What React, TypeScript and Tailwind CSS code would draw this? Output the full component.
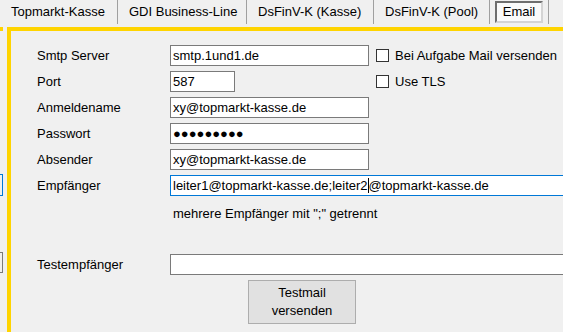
import React from "react";

const font = { fontFamily: '"Liberation Sans", Arial, sans-serif' };

function Tab({ label, w, active }: { label: string; w: string; active?: boolean }) {
  if (active) {
    return (
      <div className={`${w} h-[24px] border-r border-[#a0a0a0] flex items-center justify-center`}>
        <div className="h-[22px] w-[48px] border-2 border-t-[#6e6e6e] border-l-[#6e6e6e] border-b-[#d4d4d4] border-r-[#d4d4d4] bg-[#fafafa] flex items-center justify-center">
          Email
        </div>
      </div>
    );
  }
  return (
    <div className={`${w} h-[24px] border-r border-[#a0a0a0] flex items-center pl-[11px]`}>
      {label}
    </div>
  );
}

function Checkbox({ label }: { label: string }) {
  return (
    <div className="flex items-center gap-[6px] ml-[7px] whitespace-nowrap">
      <div className="w-[13px] h-[13px] border border-[#333333] bg-white" />
      <span>{label}</span>
    </div>
  );
}

function Row({
  label,
  children,
  extra,
}: {
  label: string;
  children: React.ReactNode;
  extra?: React.ReactNode;
}) {
  return (
    <div className="flex items-center h-[21px]">
      <div className="w-[133px] shrink-0">{label}</div>
      {children}
      {extra}
    </div>
  );
}

function Box({ w, value, focus }: { w: string; value?: React.ReactNode; focus?: boolean }) {
  return (
    <div
      className={`${w} h-[21px] shrink-0 bg-white border ${focus ? "border-[#0078d7]" : "border-[#7a7a7a]"} flex items-center pl-[2px] whitespace-nowrap overflow-hidden`}
    >
      {value}
    </div>
  );
}

export default function App() {
  return (
    <div className="w-[563px] h-[332px] bg-[#f0f0f0] text-[13px] text-black overflow-hidden" style={font}>
      <div className="flex h-[27px]">
        <Tab label="Topmarkt-Kasse" w="w-[118px]" />
        <Tab label="GDI Business-Line" w="w-[129px]" />
        <Tab label="DsFinV-K (Kasse)" w="w-[127px]" />
        <Tab label="DsFinV-K (Pool)" w="w-[116px]" />
        <Tab label="Email" w="w-[59px]" active />
      </div>

      <div className="flex h-[305px]">
        <div className="w-[7px] shrink-0 flex flex-col">
          <div className="w-[3px] h-[4px] bg-[#ffd400]" />
          <div className="mt-[143px] w-[3px] h-[22px] border-y border-r border-[#0078d7]" />
          <div className="mt-[56px] w-[3px] h-[21px] border-y border-r border-[#7a7a7a]" />
        </div>

        <div className="flex-1 border-l-4 border-t-4 border-[#ffd400] pl-[26px] pt-[14px] overflow-hidden">
          <div className="flex flex-col gap-[5px]">
            <Row label="Smtp Server" extra={<Checkbox label="Bei Aufgabe Mail versenden" />}>
              <div className="w-[199px]">
                <Box w="w-[199px]" value="smtp.1und1.de" />
              </div>
            </Row>
            <Row label="Port" extra={<Checkbox label="Use TLS" />}>
              <div className="w-[199px]">
                <Box w="w-[65px]" value="587" />
              </div>
            </Row>
            <Row label="Anmeldename">
              <Box w="w-[199px]" value="xy@topmarkt-kasse.de" />
            </Row>
            <Row label="Passwort">
              <Box
                w="w-[199px]"
                value={<span className="text-[13px] leading-none">●●●●●●●●●</span>}
              />
            </Row>
            <Row label="Absender">
              <Box w="w-[199px]" value="xy@topmarkt-kasse.de" />
            </Row>
            <Row label="Empfänger">
              <Box
                w="w-[420px]"
                focus
                value={
                  <>
                    leiter1@topmarkt-kasse.de;leiter2
                    <span className="inline-block w-px h-[15px] bg-black" />
                    @topmarkt-kasse.de
                  </>
                }
              />
            </Row>
          </div>

          <div className="ml-[136px] mt-[10px] h-[15px] leading-[15px]">mehrere Empfänger mit ";" getrennt</div>

          <div className="mt-[33px]">
            <Row label="Testempfänger">
              <Box w="w-[420px]" />
            </Row>
          </div>

          <div className="ml-[211px] mt-[5px] w-[108px] h-[44px] bg-[#e1e1e1] border border-[#adadad] flex items-center justify-center text-center leading-[18px]">
            Testmail
            <br />
            versenden
          </div>
        </div>
      </div>
    </div>
  );
}
